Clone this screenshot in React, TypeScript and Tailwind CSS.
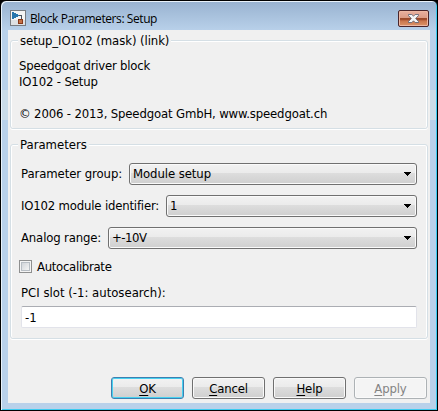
import type { ReactNode } from 'react';

const face = "font-['DejaVu_Sans_Condensed','DejaVu_Sans',sans-serif] [font-stretch:condensed]";

function Group({ title, titleClass, className, children }: { title: string; titleClass: string; className: string; children: ReactNode }) {
  return (
    <section className={`relative ml-[2px] w-[418px] rounded-[3px] border border-[#d5dfe5] shadow-[inset_0_1px_0_#fff,inset_1px_0_0_#fff,inset_-1px_0_0_#fff,0_1px_0_#fff] ${className}`}>
      <h2 className={`absolute left-[7px] -top-[9px] h-[18px] bg-[#f0f0f0] pl-[2px] pr-[2px] leading-[18px] ${titleClass}`}>{title}</h2>
      {children}
    </section>
  );
}

function SelectRow({ label, value, labelClass, valueClass }: { label: string; value: string; labelClass: string; valueClass: string }) {
  return (
    <div className="flex h-[22px] w-[396px] items-center">
      <span className={`shrink-0 ${labelClass}`}>{label}</span>
      <button className="flex h-[22px] flex-1 items-center justify-between rounded-[3px] border border-[#707070] bg-[linear-gradient(#f2f2f2_0%,#ebebeb_45%,#dddddd_46%,#cfcfcf_100%)] pl-[3px] pr-[5px] shadow-[inset_0_0_0_1px_#fafafa]">
        <span className={valueClass}>{value}</span>
        <svg width="7" height="4" viewBox="0 0 7 4" shapeRendering="crispEdges"><path d="M0 0h7v1H6v1H5v1H4v1H3V3H2V2H1V1H0z" /></svg>
      </button>
    </div>
  );
}

function ActionButton({ mnemonic, rest, className }: { mnemonic: string; rest: string; className: string }) {
  return (
    <button className={`h-[22px] w-[73px] rounded-[3px] border leading-[22px] tracking-[-0.15px] ${className}`}>
      <span className="underline decoration-1 underline-offset-2">{mnemonic}</span>{rest}
    </button>
  );
}

const normal = 'border-[#707070] bg-[linear-gradient(#f2f2f2_0%,#ebebeb_45%,#dddddd_46%,#cfcfcf_100%)] shadow-[inset_0_0_0_1px_#fafafa]';

export default function App() {
  return (
    <div className="h-[411px] w-[438px] bg-black">
      <div className={`flex h-[411px] w-[438px] flex-col rounded-t-[6px] border border-black bg-[linear-gradient(#98b2d0_0px,#b9d1ea_30px,#b9d1ea_89px,#cbdce8_89px,#cbdce8_119px,#b9d1ea_119px)] text-[13px] whitespace-nowrap text-black shadow-[inset_1px_1px_0_#e9f2fa,inset_-1px_-1px_0_#3ccbf0] ${face}`}>
        <header className="flex h-[29px] shrink-0 items-start pl-[9px] pt-[9px]">
          <svg width="16" height="16" viewBox="0 0 16 16" shapeRendering="crispEdges">
            <path fill="#f4f4f4" stroke="#777c82" d="M.5.5h15v15H.5z" />
            <path fill="#dde0e3" d="M1 10h14v5H1z" />
            <path fill="#2876ad" d="M2 2h2v1h2v1h2v1h1v1H8v1H6v1H4v1H2z" />
            <path fill="none" stroke="#47515d" d="M9 5.5h2.500V9" />
            <path fill="#c47146" stroke="#87391a" d="M8.500 9.500h4v4h-4z" />
          </svg>
          <h1 className="ml-[4px] font-['Open_Sans','Noto_Sans',sans-serif] text-[12px] leading-[18px] tracking-[-0.42px] [font-stretch:normal]">Block Parameters: Setup</h1>
          <button aria-label="Close" className="ml-auto mr-[8px] flex h-[17px] w-[31px] items-center justify-center rounded-[2px] border border-[#49252b] bg-[linear-gradient(#e9b0a0_0%,#dc9c86_45%,#984829_46%,#a55030_62%,#c9744b_64%,#dc9468_100%)] shadow-[inset_0_0_0_1px_#edb7a2]">
            <svg width="11" height="9" viewBox="0 0 11 9">
              <path fill="#f5f5f5" stroke="#535a70" strokeWidth=".8" d="M.5.5h3.300L5.500 2.200 7.200.5h3.300v1L7.700 4.500l2.800 3v1H7.200L5.500 6.800 3.800 8.500H.5v-1l2.800-3-2.800-3z" />
            </svg>
          </button>
        </header>
        <main className="ml-[7px] flex h-[373px] w-[422px] flex-col bg-[#f0f0f0]">
          <Group title="setup_IO102 (mask) (link)" titleClass="tracking-[-0.08px]" className="mt-[10px] h-[89px] shrink-0 pl-[8px] pt-[17px] tracking-[-0.15px]">
            <p className="leading-4 tracking-[-0.22px]">Speedgoat driver block</p>
            <p className="leading-4">IO102 - Setup</p>
            <p className="mt-4 leading-4">© 2006 - 2013, Speedgoat GmbH, www.speedgoat.ch</p>
          </Group>
          <Group title="Parameters" titleClass="" className="mt-[15px] h-[195px] shrink-0 pl-[10px] pt-[18px]">
            <div className="flex flex-col gap-[10px]">
              <SelectRow label="Parameter group:" value="Module setup" labelClass="w-[108px] tracking-[-0.08px]" valueClass="tracking-[-0.08px]" />
              <SelectRow label="IO102 module identifier:" value="1" labelClass="w-[145px] tracking-[-0.18px]" valueClass="" />
              <SelectRow label="Analog range:" value="+-10V" labelClass="w-[87px] tracking-[-0.15px]" valueClass="tracking-[-0.5px]" />
            </div>
            <label className="-ml-[2px] mt-[10px] flex h-[15px] items-center gap-[5px]">
              <span className="flex h-[13px] w-[13px] items-center justify-center border border-[#8e8f8f] bg-[#f4f4f4]">
                <span className="h-[9px] w-[9px] border border-[#b8bec4] bg-[linear-gradient(135deg,#d1d5d9,#f4f4f4)]" />
              </span>
              <span className="pt-px tracking-[-0.3px]">Autocalibrate</span>
            </label>
            <p className="mt-[11px] leading-4">PCI slot (-1: autosearch):</p>
            <input readOnly value="-1" className="mt-[5px] block h-[22px] w-[396px] rounded-[2px] border border-[#e2e3ea] border-t-[#abadb3] bg-white pl-[3px] pt-px" />
          </Group>
          <footer className="mt-[38px] flex gap-[8px] pl-[103px]">
            <ActionButton mnemonic="O" rest="K" className="border-[#3c7fb1] bg-[linear-gradient(#f2f2f2_0%,#ebebeb_45%,#dddddd_46%,#cfcfcf_100%)] shadow-[inset_0_0_0_1px_#48d1f0]" />
            <ActionButton mnemonic="C" rest="ancel" className={normal} />
            <ActionButton mnemonic="H" rest="elp" className={normal} />
            <ActionButton mnemonic="A" rest="pply" className="border-[#adb2b5] bg-[#f4f4f4] text-[#838383] shadow-[inset_0_0_0_1px_#fafafa]" />
          </footer>
        </main>
      </div>
    </div>
  );
}
